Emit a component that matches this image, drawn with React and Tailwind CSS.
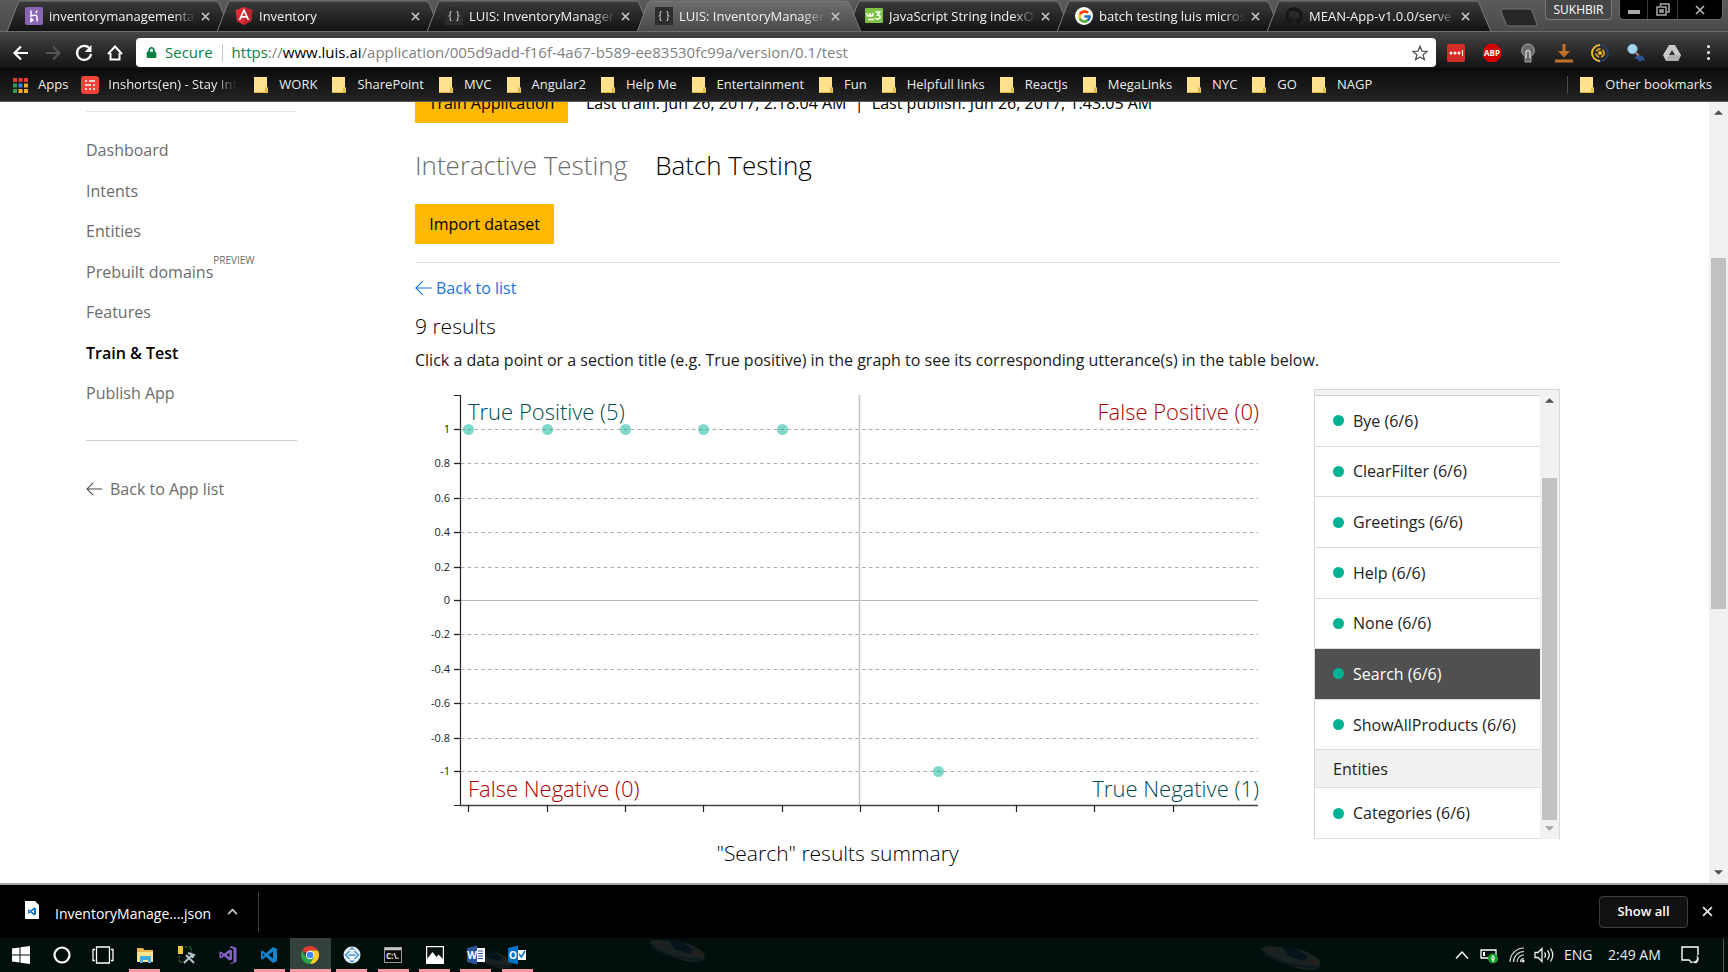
import React from "react";
import { FcGoogle } from "react-icons/fc";
import { FaGithub, FaLock } from "react-icons/fa";

/* ---------- tab strip ---------- */

function TabIcon({ kind }) {
  if (kind === "heroku")
    return (
      <svg viewBox="0 0 18 18" className="size-[18px] shrink-0">
        <rect width="18" height="18" rx="2" fill="#8a67b5" />
        <path d="M6 3.500v5.500c2-1 6-1.500 6 1v4.500M6 11.500v3l1.800-1.500zM11.800 3.500c0 1.200-.5 2-1 2.500" fill="none" stroke="#fff" strokeWidth="1.500" />
      </svg>
    );
  if (kind === "angular")
    return (
      <svg viewBox="0 0 18 18" className="size-[18px] shrink-0">
        <path d="M9 0l8.500 3-1.300 11L9 18l-7.200-4L.5 3z" fill="#dd2c35" />
        <path d="M9 0l8.500 3-1.300 11L9 18z" fill="#b9252f" />
        <path d="M4.500 13L9 3.200 13.500 13M6.300 9.800h5.400" fill="none" stroke="#fff" strokeWidth="1.700" />
      </svg>
    );
  if (kind === "luis")
    return (
      <svg viewBox="0 0 18 18" className="size-[18px] shrink-0">
        <rect width="18" height="18" fill="#2d2d2d" />
        <path d="M6.500 4.500c-2 0-1.200 1.500-1.200 3 0 1-.8 1.500-1.800 1.500 1 0 1.800.5 1.800 1.500 0 1.500-.8 3 1.200 3M11.500 4.500c2 0 1.200 1.500 1.200 3 0 1 .8 1.500 1.800 1.500-1 0-1.800.5-1.800 1.500 0 1.500.8 3-1.200 3" fill="none" stroke="#c4c4c4" strokeWidth="1.100" />
      </svg>
    );
  if (kind === "w3")
    return (
      <svg viewBox="0 0 18 18" className="size-[18px] shrink-0">
        <rect y="1" width="18" height="15" rx="1" fill="#80c342" />
        <path d="M2 6v1.500c0 2 3 2 3 0V6v1.500c0 2 3 2 3 0V6M3 12.500h6M10.500 5h4.500l-2.500 3c3.500 0 3.500 4 0 4-1 0-1.800-.3-2.300-.8" fill="none" stroke="#fff" strokeWidth="1.400" />
      </svg>
    );
  if (kind === "google")
    return (
      <span className="flex size-[18px] shrink-0 items-center justify-center rounded-full bg-white">
        <FcGoogle size={15} />
      </span>
    );
  return <FaGithub size={18} color="#161616" className="shrink-0" />;
}

const tabs = [
  { icon: "heroku", title: "inventorymanagementa" },
  { icon: "angular", title: "Inventory" },
  { icon: "luis", title: "LUIS: InventoryManager" },
  { icon: "luis", title: "LUIS: InventoryManager", active: true },
  { icon: "w3", title: "JavaScript String indexO" },
  { icon: "google", title: "batch testing luis micros" },
  { icon: "github", title: "MEAN-App-v1.0.0/serve" },
];

function CloseMark({ className }) {
  return (
    <svg viewBox="0 0 10 10" className={className}>
      <path d="M1 1l8 8M9 1L1 9" stroke="currentColor" strokeWidth="1.700" />
    </svg>
  );
}

function Tab({ icon, title, active }) {
  const fill = active ? "url(#tabOn)" : "url(#tabOff)";
  return (
    <div className={`relative -mr-[15px] flex h-8 w-[225px] shrink-0 items-center pr-[22px] pl-[18px] ${active ? "z-10" : ""}`}>
      <svg viewBox="0 0 225 32" preserveAspectRatio="none" className="absolute inset-0 h-full w-full">
        <path d="M0 32L11 3Q12 1 14 1H208Q211 1 212 3L224 32" fill={fill} stroke="#7b7b7b" strokeWidth="1" />
      </svg>
      <div className="relative flex w-full items-center">
        <TabIcon kind={icon} />
        <span className="ml-[6px] flex-1 overflow-hidden [mask-image:linear-gradient(to_right,black_84%,transparent)] text-[13px] leading-5 whitespace-nowrap text-[#f2f2f2]">
          {title}
        </span>
        <button aria-label="Close tab" className="ml-1 flex size-[10px] items-center justify-center text-[#bdbdbd]">
          <CloseMark className="size-[9px]" />
        </button>
      </div>
    </div>
  );
}

function TabStrip() {
  return (
    <div className="flex h-8 items-start overflow-hidden border-b border-[#6c6c6c] bg-gradient-to-b from-[#5a5a5a] to-[#4a4a4a] pl-[7px]">
      <svg className="absolute size-0">
        <defs>
          <linearGradient id="tabOff" x1="0" y1="0" x2="0" y2="1">
            <stop offset="0" stopColor="#3b3b3b" />
            <stop offset="1" stopColor="#111" />
          </linearGradient>
          <linearGradient id="tabOn" x1="0" y1="0" x2="0" y2="1">
            <stop offset="0" stopColor="#6e6e6e" />
            <stop offset="1" stopColor="#484848" />
          </linearGradient>
        </defs>
      </svg>
      {tabs.map((t, i) => (
        <Tab key={i} {...t} />
      ))}
      <button aria-label="New tab" className="mt-2 ml-[23px]">
        <svg viewBox="0 0 38 19" className="h-[19px] w-[38px]">
          <path d="M3 1h25q3 0 4 2l5 13q0 2-2 2H10q-3 0-4-2L1 3q0-2 2-2z" fill="#262626" stroke="#777" />
        </svg>
      </button>
      <div className="flex-1" />
      <button className="mr-[7px] h-5 w-[67px] shrink-0 rounded-b border border-t-0 border-[#7a7a7a] bg-[#474747] text-xs text-white">SUKHBIR</button>
      <div className="mr-[5px] flex h-5 w-[104px] shrink-0 divide-x divide-[#3a3a3a] rounded-b border border-t-0 border-[#6a6a6a] bg-black">
        <button aria-label="Minimize" className="flex w-[28px] items-center justify-center">
          <span className="mt-1 h-1 w-3 bg-[#a9a9a9]" />
        </button>
        <button aria-label="Restore" className="flex w-[30px] items-center justify-center">
          <svg viewBox="0 0 14 13" className="h-[13px] w-[14px]" fill="none" stroke="#a9a9a9" strokeWidth="1.500">
            <path d="M4.500 3V1h8.500v8H11M1 4h9v8H1zM4 7h3v2H4z" />
          </svg>
        </button>
        <button aria-label="Close window" className="flex flex-1 items-center justify-center text-[#b5b5b5]">
          <CloseMark className="size-[10px]" />
        </button>
      </div>
    </div>
  );
}

/* ---------- toolbar ---------- */

function ExtensionIcon({ kind }) {
  const cls = "size-[20px]";
  switch (kind) {
    case "lastpass":
      return (
        <svg viewBox="0 0 20 20" className={cls}>
          <rect x="1" y="1" width="18" height="18" rx="2" fill="#d32d27" />
          <circle cx="5" cy="10" r="1.500" fill="#fff" /><circle cx="9" cy="10" r="1.500" fill="#fff" /><circle cx="13" cy="10" r="1.500" fill="#fff" />
          <path d="M16.500 7v6" stroke="#fff" />
        </svg>
      );
    case "abp":
      return (
        <svg viewBox="0 0 20 20" className={cls}>
          <path d="M6 1h8l5 5v8l-5 5H6l-5-5V6z" fill="#d40000" />
          <text x="10" y="13" textAnchor="middle" fontSize="8" fontWeight="700" fill="#fff">ABP</text>
        </svg>
      );
    case "bulb":
      return (
        <svg viewBox="0 0 20 20" className={cls}>
          <path d="M10 1a6.500 6.500 0 00-4 11.500l1 1V19h6v-5.500l1-1A6.500 6.500 0 0010 1z" fill="#6a6a6a" stroke="#a5a5a5" />
          <path d="M8 15V9q2-3 4 0v6" fill="none" stroke="#ddd" strokeWidth="1.300" />
        </svg>
      );
    case "download":
      return (
        <svg viewBox="0 0 20 20" className={cls} fill="none" stroke="#c0722c" strokeWidth="3">
          <path d="M10 1v11M1 18h18" />
          <path d="M4 8l6 6.500L16 8z" fill="#c0722c" stroke="none" />
        </svg>
      );
    case "target":
      return (
        <svg viewBox="0 0 20 20" className={cls} fill="none" strokeWidth="2">
          <circle cx="10" cy="10" r="8" stroke="#26405e" />
          <path d="M10 2a8 8 0 000 16" stroke="#e9b92c" />
          <circle cx="10" cy="10" r="4" stroke="#c69a22" strokeDasharray="5 2" />
          <circle cx="10" cy="10" r="1" stroke="#e9b92c" />
        </svg>
      );
    case "search":
      return (
        <svg viewBox="0 0 20 20" className={cls}>
          <path d="M10 10l3 3" stroke="#c98a7a" strokeWidth="2" />
          <circle cx="6.500" cy="6" r="4.700" fill="#a5d8f0" stroke="#7fb5d2" />
          <path d="M8 15l4-3 5 1 2 5-3-1-2 2-3-3z" fill="#2f5490" />
        </svg>
      );
    default:
      return (
        <svg viewBox="0 0 20 20" className={cls}>
          <path d="M7 2h6l6 10-3 6H4l-3-6z" fill="#c9c9c9" />
          <path d="M10 7l3 5H7z" fill="#333" />
          <path d="M4 18l3-6h12l-3 6z" fill="#b0b0b0" />
        </svg>
      );
  }
}

function Toolbar() {
  return (
    <div className="flex h-9 items-center bg-gradient-to-b from-[#454545] to-[#141414] pt-[5px] pl-[12px] text-white">
      <button aria-label="Back">
        <svg viewBox="0 0 18 18" className="size-[18px]" fill="none" stroke="#fff" strokeWidth="2.200"><path d="M16 9H3M9 2.500L2.500 9 9 15.500" /></svg>
      </button>
      <button aria-label="Forward" className="ml-[14px]">
        <svg viewBox="0 0 18 18" className="size-[18px]" fill="none" stroke="#555" strokeWidth="2"><path d="M2 9h13M9 2.500L15.500 9 9 15.500" /></svg>
      </button>
      <button aria-label="Reload" className="ml-[13px]">
        <svg viewBox="0 0 18 18" className="size-[18px]"><path d="M15 5.200A7 7 0 1016 9.800" fill="none" stroke="#fff" strokeWidth="2.200" /><path d="M16.500 1v7H9.700z" fill="#fff" /></svg>
      </button>
      <button aria-label="Home" className="ml-[13px]">
        <svg viewBox="0 0 18 18" className="size-[18px]" fill="none" stroke="#fff" strokeWidth="2"><path d="M2 10L9 2.500 16 10M4.500 9v6.500h9V9" /></svg>
      </button>
      <div className="ml-[12px] flex h-[29px] flex-1 items-center rounded-sm bg-white pr-[8px] pl-[10px] text-[15px]">
        <FaLock size={11} color="#0b8043" />
        <span className="ml-[8px] text-[#0b8043]">Secure</span>
        <span className="mx-[9px] h-[18px] w-px bg-[#c8c8c8]" />
        <span className="flex-1 whitespace-nowrap text-[#808080]">
          <span className="text-[#0b8043]">https</span>://<span className="text-black">www.luis.ai</span>/application/005d9add-f16f-4a67-b589-ee83530fc99a/version/0.1/test
        </span>
        <button aria-label="Bookmark this page">
          <svg viewBox="0 0 18 18" className="size-[16px]" fill="none" stroke="#555" strokeWidth="1.500"><path d="M9 1.500l2.200 5.300 5.700.4-4.400 3.700 1.400 5.600L9 13.500l-4.900 3 1.400-5.600L1.100 7.200l5.700-.4z" /></svg>
        </button>
      </div>
      <div className="flex items-center gap-4 pr-[10px] pl-[10px]">
        {["lastpass", "abp", "bulb", "download", "target", "search", "drive"].map((k) => (
          <button key={k} aria-label={k}><ExtensionIcon kind={k} /></button>
        ))}
        <button aria-label="Menu" className="flex w-[20px] flex-col items-center gap-[3px]">
          <span className="size-[3px] rounded-full bg-white" />
          <span className="size-[3px] rounded-full bg-white" />
          <span className="size-[3px] rounded-full bg-white" />
        </button>
      </div>
    </div>
  );
}

/* ---------- bookmarks ---------- */

const bookmarks = ["WORK", "SharePoint", "MVC", "Angular2", "Help Me", "Entertainment", "Fun", "Helpfull links", "ReactJs", "MegaLinks", "NYC", "GO", "NAGP"];

function Folder() {
  return (
    <svg viewBox="0 0 14 16" className="h-4 w-[14px] shrink-0">
      <path d="M0 0h13v10l1 1v5H0z" fill="#ffe28b" />
      <path d="M0 15h14v1H0zM11 10.500h2.500V15H11z" fill="#e0b73f" />
    </svg>
  );
}

function Bookmarks() {
  return (
    <nav className="flex h-[34px] items-center border-b border-[#5a5a5a] bg-gradient-to-b from-[#0b0b0b] to-[#242424] pt-px pl-[13px] text-[13px] whitespace-nowrap text-[#ececec]">
      <a href="#apps" className="flex items-center gap-[10px]">
        <svg viewBox="0 0 15 15" className="size-[15px]">
          {["#e33b2e", "#e33b2e", "#e33b2e", "#2f9e4f", "#3b82e0", "#f0a92c", "#2f9e4f", "#f0a92c", "#f0a92c"].map((c, i) => (
            <rect key={i} x={(i % 3) * 5.5} y={Math.floor(i / 3) * 5.5} width="4" height="4" fill={c} />
          ))}
        </svg>
        Apps
      </a>
      <a href="#inshorts" className="ml-[13px] flex w-[156px] items-center gap-[9px]">
        <svg viewBox="0 0 18 18" className="size-[18px] shrink-0">
          <rect width="18" height="18" rx="3" fill="#f0443a" />
          <path d="M4 5h2M8 5h6M4 9h6M12 9h2M4 13h2M8 13h2M12 13h2" stroke="#fff" strokeWidth="1.600" />
        </svg>
        <span className="overflow-hidden [mask-image:linear-gradient(to_right,black_82%,transparent)]">Inshorts(en) - Stay Inf</span>
      </a>
      <div className="ml-[17px] flex items-center gap-[15px]">
        {bookmarks.map((b) => (
          <a key={b} href="#bookmark" className="flex items-center gap-[11px]">
            <Folder />
            {b}
          </a>
        ))}
      </div>
      <div className="flex-1" />
      <span className="mr-3 h-[18px] w-px bg-[#4d4d4d]" />
      <a href="#other" className="mr-4 flex items-center gap-[11px]">
        <Folder />
        Other bookmarks
      </a>
    </nav>
  );
}

/* ---------- page ---------- */

function LeftArrow({ className }) {
  return (
    <svg viewBox="0 0 18 16" className={className} fill="none" stroke="currentColor" strokeWidth="1.200">
      <path d="M18 8H1M8 1L1 8l7 7" />
    </svg>
  );
}

function Sidebar() {
  const items = ["Dashboard", "Intents", "Entities", "Prebuilt domains", "Features", "Train & Test", "Publish App"];
  return (
    <aside className="ml-[86px] w-[211px] shrink-0 pt-[9px] text-base leading-6 text-[#6c6c6c]">
      <hr className="border-[#e6e6e6]" />
      <nav className="mt-[26px] flex h-[267px] flex-col justify-between">
        {items.map((t) => (
          <a key={t} href="#nav" className={`flex ${t === "Train & Test" ? "font-semibold text-black" : ""}`}>
            {t}
            {t === "Prebuilt domains" && <span className="-mt-2 text-[10px] leading-4">PREVIEW</span>}
          </a>
        ))}
      </nav>
      <hr className="mt-[35px] border-[#cfcfcf]" />
      <a href="#apps" className="mt-9 flex items-center gap-2">
        <LeftArrow className="h-[14px] w-4 text-[#444]" />
        Back to App list
      </a>
    </aside>
  );
}

const yTicks = [
  ["1", 40], ["0.8", 74], ["0.6", 109], ["0.4", 143], ["0.2", 178], ["0", 211],
  ["-0.2", 245], ["-0.4", 280], ["-0.6", 314], ["-0.8", 349], ["-1", 382],
];
const xTicks = [53, 132, 210, 288, 367, 445, 523, 601, 679, 758];
const points = [[53, 40], [132, 40], [210, 40], [288, 40], [367, 40], [523, 382]];

function Chart() {
  return (
    <svg viewBox="0 0 899 430" className="block w-full" role="img" aria-label="Search results chart">
      {yTicks.map(([label, y]) => (
        <g key={label}>
          <path d={`M46 ${y + 0.5}H843`} stroke={label === "0" ? "#b5b5b5" : "#a9a9a9"} strokeDasharray={label === "0" ? undefined : "3.400 3.400"} />
          <path d={`M39 ${y + 0.5}h7`} stroke="#222" strokeWidth="1.300" />
          <text x="35" y={y + 4} textAnchor="end" fontSize="11" fill="#222">{label}</text>
        </g>
      ))}
      <path d="M444.500 6V416" stroke="#c3c3c3" strokeWidth="1.500" />
      <path d="M39 6.500H45.500V416.500H39" fill="none" stroke="#222" strokeWidth="1.200" />
      <path d="M45 416.500H843" stroke="#444" strokeWidth="1.500" />
      {xTicks.map((x) => (
        <path key={x} d={`M${x + 0.5} 416v7`} stroke="#222" strokeWidth="1.200" />
      ))}
      {points.map(([x, y], i) => (
        <circle key={i} cx={x + 0.5} cy={y + 0.5} r="5.500" fill="#00b294" fillOpacity="0.5" />
      ))}
      <g fontSize="22" fontWeight="300">
        <a href="#tp"><text x="53" y="31" fill="#004b50">True Positive (5)</text></a>
        <a href="#fp"><text x="844" y="31" textAnchor="end" fill="#a80000">False Positive (0)</text></a>
        <a href="#fn"><text x="53" y="408" fill="#a80000">False Negative (0)</text></a>
        <a href="#tn"><text x="844" y="408" textAnchor="end" fill="#004b50">True Negative (1)</text></a>
      </g>
    </svg>
  );
}

function Triangle({ down, className }) {
  return (
    <svg viewBox="0 0 10 5" className={className}>
      <path d={down ? "M0 0h10L5 5z" : "M0 5h10L5 0z"} fill="currentColor" />
    </svg>
  );
}

function IntentRow({ label, active }) {
  return (
    <button className={`flex w-full flex-1 items-center gap-[9px] border-b border-[#dcdcdc] pl-[18px] text-left ${active ? "bg-[#505050] text-white" : "text-[#222]"}`}>
      <span className="size-[11px] rounded-full bg-[#00b294]" />
      {label}
    </button>
  );
}

function IntentPanel() {
  const intents = ["Bye (6/6)", "ClearFilter (6/6)", "Greetings (6/6)", "Help (6/6)", "None (6/6)", "Search (6/6)", "ShowAllProducts (6/6)"];
  return (
    <div className="flex h-[450px] w-[246px] shrink-0 border border-b-0 border-[#d8d8d8] text-base leading-6">
      <div className="flex flex-1 flex-col">
        <div className="h-[6px] border-b border-[#d0d0d0] bg-[#f1f1f1]" />
        {intents.map((t) => (
          <IntentRow key={t} label={t} active={t.startsWith("Search")} />
        ))}
        <div className="flex h-[38px] items-center border-b border-[#dcdcdc] bg-[#f1f1f1] pl-[18px] text-[#222]">Entities</div>
        <IntentRow label="Categories (6/6)" />
      </div>
      <div className="flex w-[19px] flex-col items-center bg-[#f1f1f1] pt-2 pb-2">
        <Triangle className="h-[5px] w-[9px] text-[#505050]" />
        <div className="mt-[75px] w-[15px] flex-1 bg-[#c1c1c1]" />
        <Triangle down className="mt-[6px] h-[5px] w-[9px] text-[#a3a3a3]" />
      </div>
    </div>
  );
}

function Content() {
  return (
    <main className="ml-[118px] min-w-0 flex-1 pr-[149px] text-black">
      <div className="-mt-[19px] flex items-center">
        <button className="h-10 w-[153px] bg-[#ffb900] text-base">Train Application</button>
        <span className="ml-[18px] text-base whitespace-pre">{"Last train: Jun 26, 2017, 2:18:04 AM  |  Last publish: Jun 26, 2017, 1:43:05 AM"}</span>
      </div>
      <div className="mt-[22px] flex gap-[28px] text-[26px] leading-10 font-light">
        <button className="text-[#6c6c6c]">Interactive Testing</button>
        <button>Batch Testing</button>
      </div>
      <button className="mt-[19px] block h-10 w-[139px] bg-[#ffb900] text-base">Import dataset</button>
      <hr className="mt-[18px] border-[#e2e2e2]" />
      <a href="#list" className="mt-[13px] flex items-center gap-1 text-base leading-6 text-[#1a73d9]">
        <LeftArrow className="h-4 w-[17px]" />
        Back to list
      </a>
      <h2 className="mt-3 text-[21px] leading-7 font-light">9 results</h2>
      <p className="mt-2 text-base leading-6 text-[#1a1a1a]">
        Click a data point or a section title (e.g. True positive) in the graph to see its corresponding utterance(s) in the table below.
      </p>
      <div className="mt-[17px] flex">
        <div className="min-w-0 flex-1">
          <Chart />
          <h3 className="mt-5 mr-[54px] text-center text-[21px] leading-7 font-light">"Search" results summary</h3>
        </div>
        <IntentPanel />
      </div>
    </main>
  );
}

function PageScrollbar() {
  return (
    <div className="flex w-[19px] shrink-0 flex-col items-center bg-[#f1f1f1] pt-2 pb-2">
      <Triangle className="h-[5px] w-[9px] text-[#505050]" />
      <div className="mt-[143px] h-[351px] w-[15px] bg-[#c1c1c1]" />
      <div className="flex-1" />
      <Triangle down className="h-[5px] w-[9px] text-[#505050]" />
    </div>
  );
}

/* ---------- downloads and taskbar ---------- */

function CodeMark({ fill }) {
  return <path d="M13 1l4 2v12l-4 2-7-6.200L2.500 13.500 1 12.500v-7l1.500-1L6 7.200zM13 5.500L8.500 9l4.500 3.500zM2.800 7v4l2-2z" fill={fill} fillRule="evenodd" />;
}

function Downloads() {
  return (
    <div className="flex h-[55px] items-center border-t-2 border-[#a5a5a5] bg-black text-white">
      <button className="flex h-10 items-center border-r border-[#3c3c3c] pr-[20px] pl-[25px]">
        <svg viewBox="0 0 14 18" className="-mt-1 h-[18px] w-[14px]">
          <path d="M0 0h10l4 4v14H0z" fill="#fff" />
          <g transform="translate(2.500 6) scale(.5)"><CodeMark fill="#1374c4" /></g>
        </svg>
        <span className="mt-1 ml-4 w-[155px] text-left text-sm">InventoryManage....json</span>
        <svg viewBox="0 0 12 8" className="ml-[17px] h-[7px] w-[11px]" fill="none" stroke="#ccc" strokeWidth="2"><path d="M1 7l5-5 5 5" /></svg>
      </button>
      <div className="flex-1" />
      <button className="h-8 w-[89px] rounded-sm border border-[#3f3f3f] bg-[#111] text-[13px] font-semibold">Show all</button>
      <button aria-label="Close downloads" className="mr-[15px] ml-[14px] text-[#ddd]">
        <CloseMark className="size-[11px]" />
      </button>
    </div>
  );
}

function OfficeIcon({ letter, color, children }) {
  return (
    <svg viewBox="0 0 20 20" className="size-5">
      {children}
      <path d="M1 3l10-2.500v19L1 17z" fill={color} />
      <text x="6" y="14" textAnchor="middle" fontSize="10" fontWeight="700" fill="#fff">{letter}</text>
    </svg>
  );
}

const apps = [
  { name: "Start", icon: <svg viewBox="0 0 18 18" className="size-[18px]" fill="#fff"><path d="M0 2.500L7.500 1.500V8.500H0zM8.500 1.300L18 0v8.500H8.500zM0 9.500h7.500v7L0 15.500zM8.500 9.500H18V18l-9.500-1.300z" /></svg> },
  { name: "Cortana", icon: <svg viewBox="0 0 18 18" className="size-[18px]"><circle cx="9" cy="9" r="7.500" fill="none" stroke="#fff" strokeWidth="2.200" /></svg> },
  { name: "Task view", icon: <svg viewBox="0 0 22 18" className="h-[18px] w-[22px]" fill="none" stroke="#fff" strokeWidth="1.300"><path d="M4.500 1h13v16h-13zM3 3.500H1v11h2M19 3.500h2v11h-2" /></svg> },
  { name: "File Explorer", open: true, icon: <svg viewBox="0 0 18 18" className="size-[18px]"><path d="M1 2h6l1.500 2H17v12H1z" fill="#e8b64a" /><path d="M1 6h16v10H1z" fill="#ffe591" /><path d="M4 10h11v7h-3v-3H7v3H4z" fill="#45abe3" /></svg> },
  { name: "SQL tools", icon: <svg viewBox="0 0 20 20" className="size-5"><path d="M2 1h5v8H2z" fill="#f3c73c" /><path d="M9 2h6v6M3 11v6h5" fill="none" stroke="#3f8d44" strokeDasharray="2 1.500" /><path d="M8 18l8-8M10 10l8 8M12 8l6 2-2 3" stroke="#b9c2cc" strokeWidth="2" fill="none" /></svg> },
  { name: "Visual Studio", icon: <svg viewBox="0 0 18 18" className="size-[18px]"><path d="M12.500 0l5 2v14l-5 2-2-.8 4-1V3l-4-1.500z" fill="#8661c5" /><path d="M10.500 3.500l2.500 1v9l-2.500 1L5 10.200 2 12.500.5 12V6L2 5.500 5 7.800zM10.500 6.800L7.500 9l3 2.200zM2 7.500v3L3.500 9z" fill="#8661c5" fillRule="evenodd" /></svg> },
  { name: "Code", open: true, icon: <svg viewBox="0 0 18 18" className="size-[18px]"><CodeMark fill="#1484cf" /></svg> },
  { name: "Chrome", open: true, active: true, icon: <svg viewBox="0 0 18 18" className="size-[18px]"><path d="M9 9L1.200 4.500A9 9 0 0116.800 4.500H9z" fill="#e33b2e" /><path d="M9 9l3.900 2.200L9 18A9 9 0 011.200 4.500L5.100 11.200z" fill="#2aa14b" /><path d="M9 4.500h7.800A9 9 0 019 18l3.900-6.800z" fill="#fccd2e" /><circle cx="9" cy="9" r="4.200" fill="#fff" /><circle cx="9" cy="9" r="3.300" fill="#4285f4" /></svg> },
  { name: "TeamViewer", open: true, icon: <svg viewBox="0 0 18 18" className="size-[18px]"><circle cx="9" cy="9" r="8.500" fill="#e9f3fb" /><path d="M6.500 5L2.500 9l4 4M11.500 5l4 4-4 4M5.500 9h7M7 3.500l2-1.300 2 1.300M7 14.500l2 1.300 2-1.300" fill="none" stroke="#3d8fd1" strokeWidth="1.400" /></svg> },
  { name: "Command Prompt", open: true, icon: <svg viewBox="0 0 18 16" className="h-4 w-[18px]"><rect x=".5" y=".5" width="17" height="15" fill="#0a0a0a" stroke="#9a9a9a" /><path d="M1 2h16" stroke="#c8c8c8" strokeWidth="2.500" /><text x="2" y="12" fontSize="8" fontWeight="700" fill="#eee">C:\.</text></svg> },
  { name: "Photos", open: true, icon: <svg viewBox="0 0 18 18" className="size-[18px]"><rect x=".6" y=".6" width="16.800" height="16.800" fill="#0c1512" stroke="#fff" strokeWidth="1.200" /><path d="M1 17v-4l5.500-7 4 5 2-2.500L17 13v4z" fill="#fff" /></svg> },
  { name: "Word", open: true, icon: <OfficeIcon letter="W" color="#2b579a"><path d="M10 3h9v14h-9z" fill="#fff" /><path d="M12 6h5M12 8.500h5M12 11h5M12 13.500h5" stroke="#2b579a" strokeWidth="1.200" /></OfficeIcon> },
  { name: "Outlook", open: true, icon: <OfficeIcon letter="O" color="#0072c6"><path d="M10 5h9v10h-9z" fill="#fff" /><path d="M12 9l2.500 3L18 6" stroke="#0072c6" strokeWidth="1.500" fill="none" /></OfficeIcon> },
];

function Boat({ className }) {
  return (
    <svg viewBox="0 0 60 26" className={`absolute opacity-60 ${className}`}>
      <path d="M1 5Q4 1 12 2L34 4Q50 8 57 16L55 23Q44 26 30 21L12 13z" fill="#2b2f30" />
      <path d="M3 9Q26 22 54 22" stroke="#10202b" strokeWidth="2" fill="none" />
      <path d="M20 2l14 2 10 7-2 5-14-4z" fill="#0b1724" />
      <path d="M8 5l5 1M47 14l6 4" stroke="#4a2a26" strokeWidth="2" />
    </svg>
  );
}

function Taskbar() {
  return (
    <footer className="relative flex h-[34px] shrink-0 items-center overflow-hidden bg-[#020f0c] text-sm text-[#ececec]">
      <Boat className="top-0 left-[648px] h-[26px] w-[60px]" />
      <Boat className="top-[6px] left-[1260px] h-[28px] w-[64px]" />
      <Boat className="top-[10px] left-[455px] h-[22px] w-[70px]" />
      <div className="relative flex h-full w-[538px] shrink-0">
        {apps.map((a) => (
          <button key={a.name} aria-label={a.name} className={`relative flex h-full flex-1 items-center justify-center ${a.active ? "bg-[#33423e]" : ""}`}>
            {a.icon}
            {a.open && <span className={`absolute bottom-0 h-[3px] bg-[#f99aa2] ${a.active ? "w-full" : "w-[31px]"}`} />}
          </button>
        ))}
      </div>
      <div className="flex-1" />
      <div className="relative flex h-full items-center">
        <svg viewBox="0 0 14 8" className="h-2 w-[14px]" fill="none" stroke="#fff" strokeWidth="1.400"><path d="M1 7.500L7 1l6 6.500" /></svg>
        <svg viewBox="0 0 18 18" className="ml-[11px] size-[18px]"><path d="M1 4h15v8H1z" fill="none" stroke="#fff" strokeWidth="1.300" /><path d="M3 6h2v4H3z" fill="#fff" /><circle cx="13" cy="12.500" r="5" fill="#16a02c" /><path d="M13 9.500q3 3 0 5-3-2 0-5M13 12v4" stroke="#fff" fill="none" /></svg>
        <svg viewBox="0 0 16 16" className="ml-[11px] size-4" fill="none" stroke="#ddd" strokeWidth="1.200"><path d="M1 15A14 14 0 0115 1M4.500 15A10.500 10.500 0 0115 4.500M8 15a7 7 0 017-7M11.500 15a3.500 3.500 0 013.500-3.500" /><circle cx="14" cy="14" r="1" fill="#ddd" /></svg>
        <svg viewBox="0 0 20 16" className="ml-[9px] h-4 w-5" fill="none" stroke="#eee" strokeWidth="1.300"><path d="M1 5.500h3l4-4v13l-4-4H1zM10.500 5.500q2 2.500 0 5M13.500 3.500q3.500 4.500 0 9M16.500 1.500q4.500 6.500 0 13" /></svg>
        <span className="ml-[10px] w-[44px]">ENG</span>
        <span className="w-[73px] whitespace-nowrap">2:49 AM</span>
        <svg viewBox="0 0 18 18" className="size-[18px]" fill="none" stroke="#fff" strokeWidth="1.400"><path d="M17 9V1H1v13h7l3 3" /><path d="M16 9.500q1.500 6-4.500 6.500 5.500 3.500 6-4z" fill="#fff" strokeWidth=".5" /></svg>
        <span className="mr-1 ml-[24px] h-full w-px bg-[#4a5854]" />
      </div>
    </footer>
  );
}

export default function App() {
  return (
    <div className="flex h-screen flex-col overflow-hidden bg-white font-['Open_Sans','Noto_Sans',sans-serif]">
      <header className="shrink-0">
        <TabStrip />
        <Toolbar />
        <Bookmarks />
      </header>
      <div className="flex min-h-0 flex-1 overflow-hidden">
        <Sidebar />
        <Content />
        <PageScrollbar />
      </div>
      <div className="shrink-0">
        <Downloads />
      </div>
      <Taskbar />
    </div>
  );
}
